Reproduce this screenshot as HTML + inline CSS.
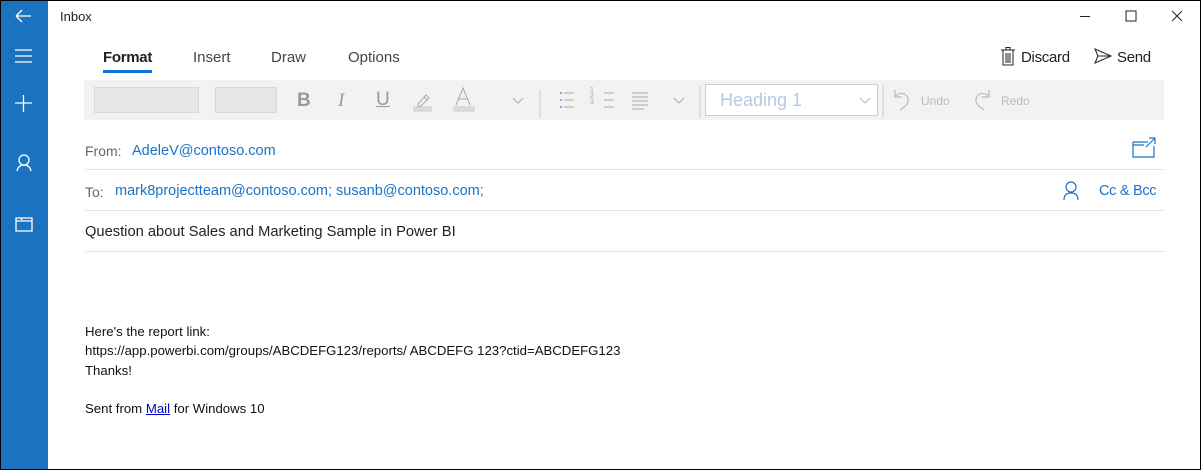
<!DOCTYPE html><html><head><style>
*{margin:0;padding:0;box-sizing:border-box}
body{width:1201px;height:470px;overflow:hidden;background:#fff;font-family:"Liberation Sans",sans-serif;position:relative}
.win{position:absolute;left:0;top:0;width:1201px;height:470px;border:1px solid #000}
.side{position:absolute;left:1px;top:1px;width:47px;height:468px;background:#1b73c0}
.a{position:absolute;white-space:nowrap}
svg{position:absolute;overflow:visible}
</style></head><body>
<div class="win"></div>
<div class="side"></div>
<svg width="48" height="240" style="left:0;top:0" fill="none" stroke="#fff" stroke-width="1.3">
<path d="M16 16h15M16 16l6-6M16 16l6 6"/>
<path d="M15 50h17M15 56h17M15 62h17"/>
<path d="M15 103h17M23.5 95v17"/>
<circle cx="24" cy="160" r="5"/><path d="M17 171c1-5 4-6 7-6s6 1 7 6"/>
<path d="M16 218h16v13H16zM16 221h16M16 218h5l1 2"/>
</svg>
<div class="a" style="left:60px;top:9px;font-size:13px;color:#222">Inbox</div>
<svg width="200" height="30" style="left:1070px;top:0" fill="none" stroke="#222" stroke-width="1">
<path d="M10 16.5h10M56 11h10v10H56zM102 11l10 10M112 11l-10 10"/>
</svg>
<div class="a" style="left:103px;top:49px;font-size:15px;color:#222;font-weight:bold;letter-spacing:-.3px">Format</div>
<div style="position:absolute;left:103px;top:70px;width:49px;height:3px;background:#0a73d6"></div>
<div class="a" style="left:193px;top:49px;font-size:15px;color:#444">Insert</div>
<div class="a" style="left:271px;top:49px;font-size:15px;color:#444">Draw</div>
<div class="a" style="left:348px;top:49px;font-size:15px;color:#444">Options</div>
<svg width="20" height="20" style="left:1000px;top:46px" fill="none" stroke="#222" stroke-width="1">
<path d="M1 4h14M3 4v15h10V4M6 4V1.5h4V4M6 7v10M8 7v10M10 7v10"/></svg>
<div class="a" style="left:1021px;top:49px;font-size:15px;color:#222;letter-spacing:-.3px">Discard</div>
<svg width="20" height="20" style="left:1094px;top:48px" fill="none" stroke="#222" stroke-width="1">
<path d="M1 1l16 7-16 7 3-7zM4 8h13"/></svg>
<div class="a" style="left:1117px;top:49px;font-size:15px;color:#222;letter-spacing:-.3px">Send</div>
<div style="position:absolute;left:84px;top:80px;width:1080px;height:40px;background:#f2f2f2"></div>
<div style="position:absolute;left:94px;top:87px;width:105px;height:26px;background:#e6e6e6;border:1px solid #d8d8d8"></div>
<div style="position:absolute;left:215px;top:87px;width:62px;height:26px;background:#e6e6e6;border:1px solid #d8d8d8"></div>
<div class="a" style="left:297px;top:90px;font-size:19px;font-weight:bold;color:#999">B</div>
<div class="a" style="left:338px;top:90px;font-size:19px;font-style:italic;color:#999;font-family:'Liberation Serif',serif">I</div>
<div class="a" style="left:376px;top:89px;font-size:19px;color:#999;text-decoration:underline">U</div>
<svg width="300" height="30" style="left:410px;top:86px" fill="none" stroke="#aaa" stroke-width="1">
<path d="M8 18l8-9 3 3-8 8h-3zM14 11l3 3"/>
<rect x="4" y="21" width="17" height="4" fill="#ddd" stroke="#ccc"/>
<path d="M46 19l7-17 7 17M49 13h8"/>
<rect x="44" y="21" width="20" height="4" fill="#ddd" stroke="#ccc"/>
<path d="M103 12l5 5 5-5"/>
<path d="M130 4v28" stroke="#ccc"/>
<path d="M154 7h10M154 14h10M154 21h10" />
<path d="M150 7h2M150 14h2M150 21h2" stroke="#7ab0e0" stroke-width="2"/>
<path d="M194 7h10M194 14h10M194 21h10"/>
<path d="M222 7h16M222 11h16M222 15h16M222 19h16M222 23h12"/>
<path d="M264 12l5 5 5-5"/>
<path d="M290 0v32" stroke="#ccc"/>
</svg>
<div class="a" style="left:590px;top:88px;font-size:7px;color:#7ab0e0;line-height:6px">1<br>2<br>3</div>
<div style="position:absolute;left:705px;top:84px;width:173px;height:32px;background:#fff;border:1px solid #ccc"></div>
<div class="a" style="left:720px;top:90px;font-size:18px;color:#b8c8e0">Heading 1</div>
<svg width="60" height="30" style="left:855px;top:86px" fill="none" stroke="#bbb" stroke-width="1">
<path d="M5 12l5 5 5-5"/><path d="M28 0v32" stroke="#ccc"/></svg>
<svg width="120" height="30" style="left:890px;top:86px" fill="none" stroke="#bbb" stroke-width="1.2">
<path d="M5 4v7h7M5 11c3-5 12-5 13 2 1 5-4 8-8 11"/>
<path d="M99 4v7h-7M99 11c-3-5-12-5-13 2-1 5 4 8 8 11"/></svg>
<div class="a" style="left:921px;top:94px;font-size:12px;color:#bbb">Undo</div>
<div class="a" style="left:1001px;top:94px;font-size:12px;color:#bbb">Redo</div>
<div class="a" style="left:85px;top:143px;font-size:14px;color:#666">From:</div>
<div class="a" style="left:132px;top:143px;font-size:14.5px;color:#1a73c8">AdeleV@contoso.com</div>
<svg width="26" height="22" style="left:1132px;top:137px" fill="none" stroke="#1a73c8" stroke-width="1.2">
<path d="M1 5h15M1 5v15h21v-11M1 8h11M14 10l9-9M17 1h6v6"/></svg>
<div style="position:absolute;left:85px;top:169px;width:1079px;height:1px;background:#e4e4e4"></div>
<div class="a" style="left:85px;top:184px;font-size:14px;color:#666">To:</div>
<div class="a" style="left:115px;top:183px;font-size:14.5px;color:#1a73c8">mark8projectteam@contoso.com; susanb@contoso.com;</div>
<svg width="20" height="20" style="left:1063px;top:181px" fill="none" stroke="#1a73c8" stroke-width="1.2">
<circle cx="8" cy="6" r="5"/><path d="M1 19c0-5 3-7 7-7s7 2 7 7"/></svg>
<div class="a" style="left:1099px;top:183px;font-size:14.5px;color:#1a73c8;letter-spacing:-.3px">Cc &amp; Bcc</div>
<div style="position:absolute;left:85px;top:210px;width:1079px;height:1px;background:#e4e4e4"></div>
<div class="a" style="left:85px;top:224px;font-size:14.7px;color:#222">Question about Sales and Marketing Sample in Power BI</div>
<div style="position:absolute;left:85px;top:251px;width:1079px;height:1px;background:#e4e4e4"></div>
<div class="a" style="left:85px;top:322px;font-size:13.2px;color:#111;line-height:19.3px">Here's the report link:<br>https://app.powerbi.com/groups/ABCDEFG123/reports/ ABCDEFG 123?ctid=ABCDEFG123<br>Thanks!<br><br>Sent from <span style="color:#00c;text-decoration:underline">Mail</span> for Windows 10</div>
</body></html>
